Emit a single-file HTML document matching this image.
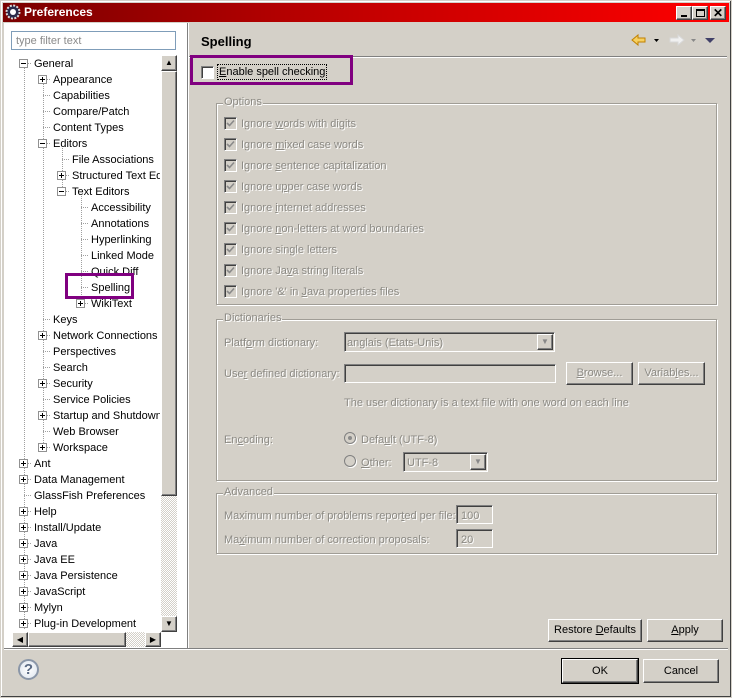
<!DOCTYPE html>
<html><head><meta charset="utf-8"><style>
*{margin:0;padding:0;box-sizing:border-box}
body{width:732px;height:698px;background:#d4d0c8;font-family:"Liberation Sans",Tahoma,sans-serif;font-size:11px;position:relative;overflow:hidden;color:#000}
.a{position:absolute;white-space:nowrap}
.dis{color:#8c8a84;text-shadow:1px 1px 0 #fff}
.cb{position:absolute;width:13px;height:13px;border:1px solid #808080;border-right-color:#fff;border-bottom-color:#fff;background:#d4d0c8;box-shadow:inset 1px 1px 0 #404040}
.cb svg{position:absolute;left:1px;top:1px}
.grp{position:absolute;border:1px solid #a09d96;box-shadow:1px 1px 0 #fff, inset 1px 1px 0 #fff}
.grp span{position:absolute;top:-8px;left:6px;background:#d4d0c8;padding:0 1px}
.btn{position:absolute;background:#d4d0c8;border:1px solid;border-color:#fff #404040 #404040 #fff;box-shadow:inset -1px -1px 0 #808080;text-align:center;line-height:20px}
.fld{position:absolute;border:1px solid;border-color:#808080 #fff #fff #808080;box-shadow:inset 1px 1px 0 #404040;background:#d4d0c8}
.pm{position:absolute;width:9px;height:9px;border:1px solid #919191;background:#fff}
.pm:before{content:"";position:absolute;left:1px;top:3px;width:5px;height:1px;background:#000}
.pm.p:after{content:"";position:absolute;left:3px;top:1px;width:1px;height:5px;background:#000}
.t{position:absolute;white-space:nowrap;line-height:14px}
</style></head><body>
<div class="a" style="left:0;top:0;width:732px;height:698px;border:1px solid #d4d0c8;box-shadow:inset -1px -1px 0 #404040, inset 1px 1px 0 #fff"></div>
<div class="a" style="left:3px;top:3px;width:726px;height:19px;background:linear-gradient(90deg,#7a0000,#c40000 50%,#ff0000)"></div>
<svg class="a" style="left:5px;top:4px" width="16" height="16" viewBox="0 0 16 16"><circle cx="8" cy="8" r="6.5" fill="#2a2a4a" stroke="#ddd" stroke-width="2" stroke-dasharray="2 1.4"/><circle cx="8" cy="8" r="3" fill="#fff"/></svg>
<div class="a" style="left:24px;top:5px;color:#fff;font-weight:bold;font-size:12px">Preferences</div>
<div class="btn" style="left:676px;top:6px;width:16px;height:14px;line-height:12px"><div style="position:absolute;left:4px;top:8px;width:6px;height:2px;background:#000"></div></div>
<div class="btn" style="left:692px;top:6px;width:16px;height:14px"><div style="position:absolute;left:3px;top:2px;width:9px;height:8px;border:1px solid #000;border-top-width:2px"></div></div>
<div class="btn" style="left:710px;top:6px;width:16px;height:14px;font-weight:bold;font-size:12px;line-height:12px">✕</div>

<div class="a" style="left:4px;top:23px;width:183px;height:625px;background:#fff"></div>
<div class="a" style="left:187px;top:23px;width:1px;height:625px;background:#808080"></div>
<div class="a" style="left:188px;top:23px;width:1px;height:625px;background:#fff"></div>
<div class="fld" style="left:11px;top:31px;width:165px;height:19px;background:#fff;box-shadow:none;border-color:#7f9db9"></div>
<div class="a" style="left:16px;top:35px;color:#8a8a8a">type filter text</div>

<div class="a" id="tree" style="left:0;top:0;width:160px;height:632px;overflow:hidden">
<svg class="a" style="left:0;top:0" width="160" height="632">
<g stroke="#a0a0a0" stroke-dasharray="1 1">
<line x1="24.5" y1="68" x2="24.5" y2="630"/>
<line x1="43.5" y1="84" x2="43.5" y2="448"/>
<line x1="62.5" y1="148" x2="62.5" y2="192"/>
<line x1="81.5" y1="196" x2="81.5" y2="304"/>
</g>
</svg>
</div>

<div class="a" style="left:161px;top:55px;width:16px;height:577px;background:repeating-conic-gradient(#d4d0c8 0 25%,#fff 0 50%) 0 0/2px 2px"></div>
<div class="btn" style="left:161px;top:55px;width:16px;height:16px;font-size:8px;line-height:14px">▲</div>
<div class="btn" style="left:161px;top:71px;width:16px;height:425px"></div>
<div class="btn" style="left:161px;top:616px;width:16px;height:16px;font-size:8px;line-height:14px">▼</div>
<div class="a" style="left:12px;top:632px;width:149px;height:15px;background:repeating-conic-gradient(#d4d0c8 0 25%,#fff 0 50%) 0 0/2px 2px"></div>
<div class="btn" style="left:12px;top:632px;width:16px;height:15px;font-size:8px;line-height:13px">◀</div>
<div class="btn" style="left:28px;top:632px;width:98px;height:15px"></div>
<div class="btn" style="left:145px;top:632px;width:16px;height:15px;font-size:8px;line-height:13px">▶</div>

<div class="a" style="left:201px;top:34px;font-weight:bold;font-size:13px">Spelling</div>
<svg class="a" style="left:630px;top:32px" width="90" height="16">
<path d="M2 8 L8 3 V6 H15 V10 H8 V13 Z" fill="#f7d060" stroke="#c08000"/>
<path d="M24 7h5l-2.5 3z" fill="#000"/>
<path d="M54 8 L48 3 V6 H40 V10 H48 V13 Z" fill="#f0f0f0" stroke="#d8d8d8"/>
<path d="M61 7h5l-2.5 3z" fill="#888"/>
<path d="M75 6h10l-5 5z" fill="#404068"/>
</svg>
<div class="a" style="left:189px;top:56px;width:538px;height:1px;background:#808080"></div>
<div class="a" style="left:189px;top:57px;width:538px;height:1px;background:#fff"></div>

<div class="a" style="left:190px;top:55px;width:163px;height:30px;border:3px solid #800080"></div>
<div class="cb" style="left:201px;top:66px;background:#fff"></div>
<div class="a" style="left:217px;top:65px;border:1px dotted #000;padding:0 1px;line-height:13px;top:64px;height:16px;padding-top:1px"><u>E</u>nable spell checking</div>

<div class="grp" style="left:216px;top:103px;width:501px;height:202px"><span class="dis">Options</span></div>
<div id="opts"></div>

<div class="grp" style="left:216px;top:319px;width:501px;height:162px"><span class="dis">Dictionaries</span></div>
<div class="a dis" style="left:224px;top:337px">Platf<u>o</u>rm dictionary:</div>
<div class="fld" style="left:344px;top:332px;width:211px;height:20px"></div>
<div class="a dis" style="left:347px;top:337px">anglais (Etats-Unis)</div>
<div class="btn" style="left:537px;top:334px;width:16px;height:16px;font-size:8px;line-height:14px;color:#888">▼</div>
<div class="a dis" style="left:224px;top:368px">Use<u>r</u> defined dictionary:</div>
<div class="fld" style="left:344px;top:364px;width:212px;height:19px"></div>
<div class="btn dis" style="left:566px;top:362px;width:67px;height:23px"><u>B</u>rowse...</div>
<div class="btn dis" style="left:638px;top:362px;width:67px;height:23px">Variab<u>l</u>es...</div>
<div class="a dis" style="left:344px;top:397px">The user dictionary is a text file with one word on each line</div>
<div class="a dis" style="left:224px;top:434px">En<u>c</u>oding:</div>
<div class="a" style="left:344px;top:432px;width:12px;height:12px;border-radius:50%;border:1px solid #808080;box-shadow:1px 1px 0 #fff"><div style="position:absolute;left:3px;top:3px;width:4px;height:4px;border-radius:50%;background:#8a8a8a"></div></div>
<div class="a dis" style="left:361px;top:434px">Defa<u>u</u>lt (UTF-8)</div>
<div class="a" style="left:344px;top:455px;width:12px;height:12px;border-radius:50%;border:1px solid #808080;box-shadow:1px 1px 0 #fff"></div>
<div class="a dis" style="left:361px;top:457px"><u>O</u>ther:</div>
<div class="fld" style="left:403px;top:452px;width:85px;height:20px"></div>
<div class="a dis" style="left:407px;top:457px">UTF-8</div>
<div class="btn" style="left:470px;top:454px;width:16px;height:16px;font-size:8px;line-height:14px;color:#888">▼</div>

<div class="grp" style="left:216px;top:493px;width:501px;height:61px"><span class="dis">Advanced</span></div>
<div class="a dis" style="left:224px;top:510px">Maximum number of problems repor<u>t</u>ed per file:</div>
<div class="fld" style="left:456px;top:505px;width:37px;height:19px"></div>
<div class="a dis" style="left:461px;top:510px">100</div>
<div class="a dis" style="left:224px;top:534px">Ma<u>x</u>imum number of correction proposals:</div>
<div class="fld" style="left:456px;top:529px;width:37px;height:19px"></div>
<div class="a dis" style="left:461px;top:534px">20</div>

<div class="btn" style="left:548px;top:619px;width:94px;height:23px;line-height:21px">Restore <u>D</u>efaults</div>
<div class="btn" style="left:647px;top:619px;width:76px;height:23px;line-height:21px"><u>A</u>pply</div>
<div class="a" style="left:4px;top:648px;width:724px;height:1px;background:#808080"></div>
<div class="a" style="left:4px;top:649px;width:724px;height:1px;background:#fff"></div>
<div class="a" style="left:18px;top:659px;width:21px;height:21px;border-radius:50%;border:2px solid #8a96a8;background:radial-gradient(#fff,#dde4ee);text-align:center;font-weight:bold;font-size:15px;line-height:17px;color:#5a6a84">?</div>
<div class="btn" style="left:562px;top:659px;width:76px;height:24px;outline:1px solid #000;line-height:23px">OK</div>
<div class="btn" style="left:643px;top:659px;width:76px;height:24px;line-height:23px">Cancel</div>

<div class="a" style="left:65px;top:273px;width:69px;height:26px;border:3px solid #800080"></div>

<script>
var items=[["General",34,"m"],["Appearance",53,"p"],["Capabilities",53],["Compare/Patch",53],["Content Types",53],["Editors",53,"m"],["File Associations",72],["Structured Text Editors",72,"p"],["Text Editors",72,"m"],["Accessibility",91],["Annotations",91],["Hyperlinking",91],["Linked Mode",91],["Quick Diff",91],["Spelling",91],["WikiText",91,"p"],["Keys",53],["Network Connections",53,"p"],["Perspectives",53],["Search",53],["Security",53,"p"],["Service Policies",53],["Startup and Shutdown",53,"p"],["Web Browser",53],["Workspace",53,"p"],["Ant",34,"p"],["Data Management",34,"p"],["GlassFish Preferences",34],["Help",34,"p"],["Install/Update",34,"p"],["Java",34,"p"],["Java EE",34,"p"],["Java Persistence",34,"p"],["JavaScript",34,"p"],["Mylyn",34,"p"],["Plug-in Development",34,"p"]];
var tree=document.getElementById("tree"),svg=tree.querySelector("svg"),h="";
var g="";
items.forEach(function(it,i){var y=63+i*16;var x=it[1];
 g+='<line x1="'+(x-10)+'" y1="'+(y+.5)+'" x2="'+(x-2)+'" y2="'+(y+.5)+'" stroke="#a0a0a0" stroke-dasharray="1 1"/>';
 h+='<div class="t" style="left:'+x+'px;top:'+(y-6)+'px">'+it[0]+'</div>';
 if(it[2])h+='<div class="pm '+(it[2]=="p"?"p":"")+'" style="left:'+(x-15)+'px;top:'+(y-4)+'px"></div>';
});
svg.insertAdjacentHTML("beforeend",g);tree.insertAdjacentHTML("beforeend",h);
var o=["Ignore <u>w</u>ords with digits","Ignore <u>m</u>ixed case words","Ignore <u>s</u>entence capitalization","Ignore u<u>p</u>per case words","Ignore <u>i</u>nternet addresses","Ignore <u>n</u>on-letters at word boundaries","Ignore single letters","Ignore Ja<u>v</u>a string literals","Ignore '&amp;' in <u>J</u>ava properties files"],s="";
o.forEach(function(t,i){var y=123+i*21;
 s+='<div class="cb" style="left:224px;top:'+(y-6)+'px"><svg width="9" height="9"><path d="M1 4 L3.5 6.5 L8 1.5" stroke="#8a8a8a" stroke-width="1.6" fill="none"/></svg></div><div class="a dis" style="left:241px;top:'+(y-5)+'px">'+t+'</div>';});
document.getElementById("opts").innerHTML=s;
</script>
</body></html>
